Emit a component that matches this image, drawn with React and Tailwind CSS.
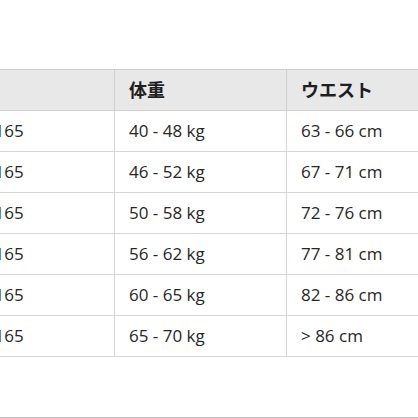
import React from "react";

const rows = [
  { height: "150 - 165", weight: "40 - 48 kg", waist: "63 - 66 cm" },
  { height: "150 - 165", weight: "46 - 52 kg", waist: "67 - 71 cm" },
  { height: "150 - 165", weight: "50 - 58 kg", waist: "72 - 76 cm" },
  { height: "150 - 165", weight: "56 - 62 kg", waist: "77 - 81 cm" },
  { height: "150 - 165", weight: "60 - 65 kg", waist: "82 - 86 cm" },
  { height: "150 - 165", weight: "65 - 70 kg", waist: "> 86 cm" },
];

const font = { fontFamily: '"Open Sans", "Noto Sans CJK JP", sans-serif' };

const App = () => {
  return (
    <div className="w-[418px] h-[418px] overflow-hidden bg-white pt-[69px]" style={font}>
      <div className="-ml-[64px] w-[560px]">
        {/* header */}
        <div className="grid grid-cols-[179px_172px_1fr] h-[42px] bg-[#e8e8e8] border-y border-[#cfcfcf] text-[18px] font-bold text-[#1e1e1e]">
          <div className="flex items-center pl-[14px] border-r border-[#cfcfcf]">身長</div>
          <div className="flex items-center pl-[14px] border-r border-[#cfcfcf]">体重</div>
          <div className="flex items-center pl-[14px]">ウエスト</div>
        </div>
        {rows.map((r, i) => (
          <div
            key={i}
            className="grid grid-cols-[179px_172px_1fr] h-[41px] border-b border-[#d6d6d6] text-[17px] text-[#262626]"
          >
            <div className="flex items-center pl-[15px] border-r border-[#d6d6d6]">{r.height}</div>
            <div className="flex items-center pl-[14px] border-r border-[#d6d6d6]">{r.weight}</div>
            <div className="flex items-center pl-[14px]">{r.waist}</div>
          </div>
        ))}
      </div>
      <div className="mt-[60px] h-[2px] bg-[#c4c4c4]" />
    </div>
  );
};

export default App;
